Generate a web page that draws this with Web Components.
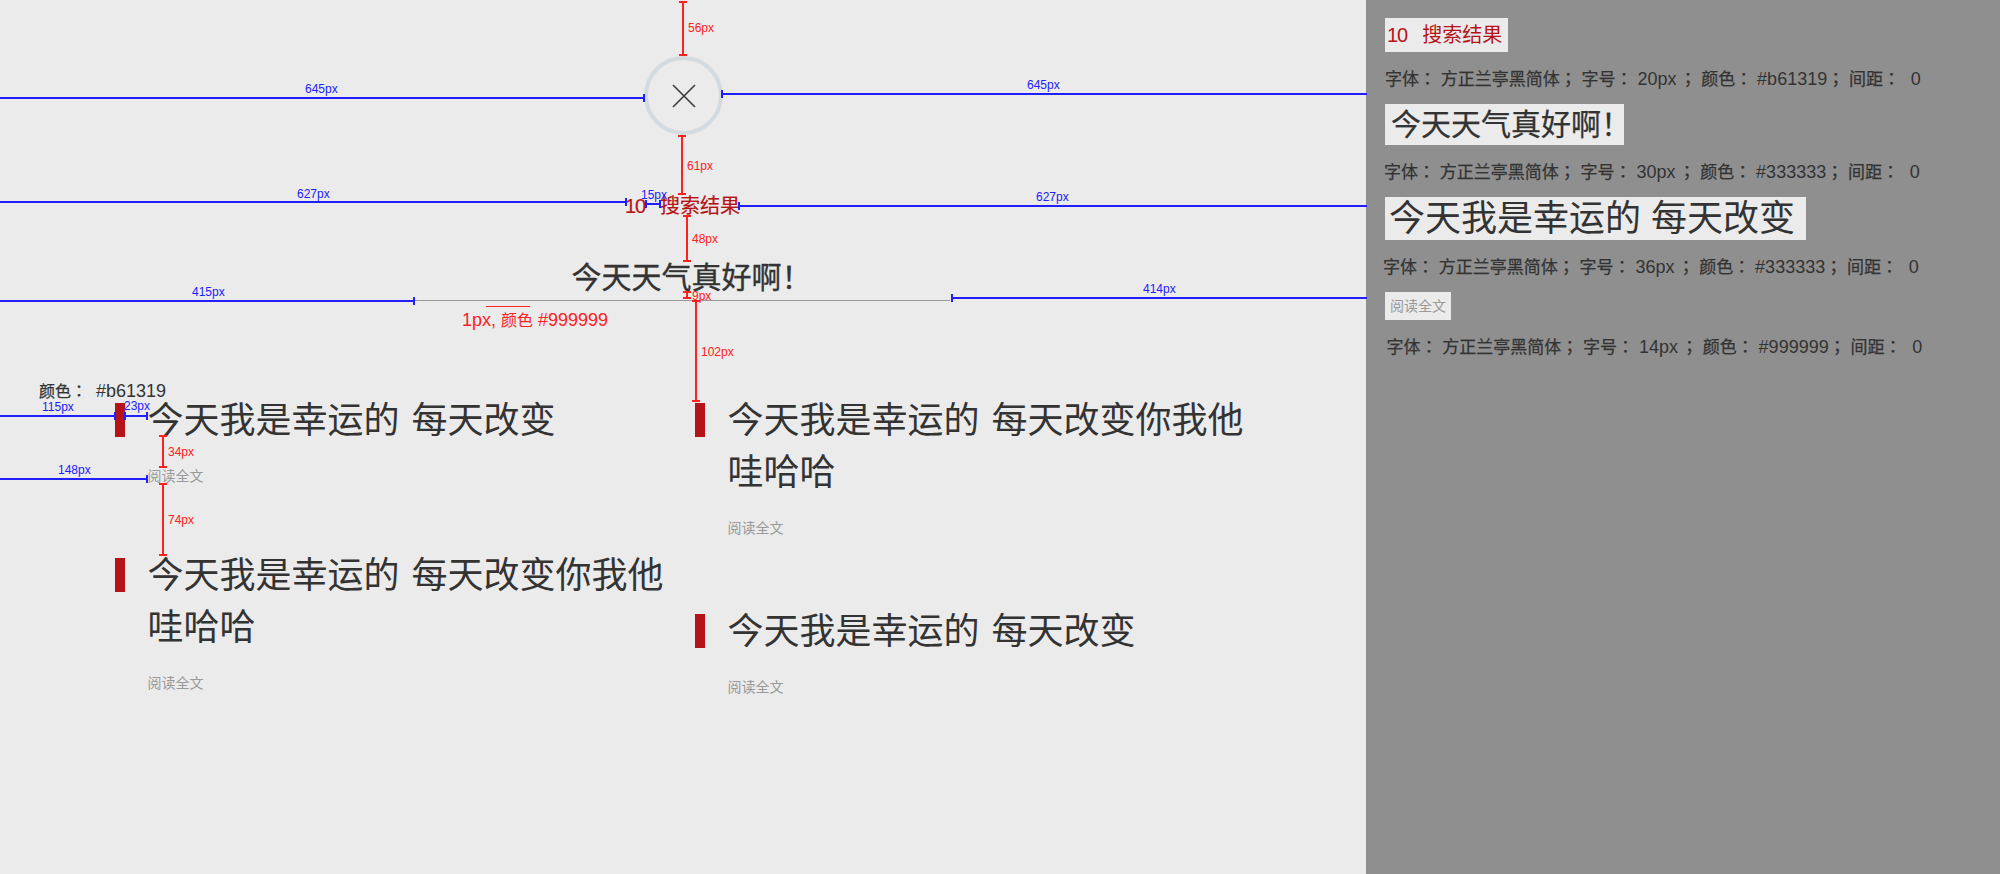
<!DOCTYPE html>
<html lang="zh"><head><meta charset="utf-8"><title>标注</title>
<style>
html,body{margin:0;height:100%;overflow:hidden;background:#ebebeb}
body{font-family:"Liberation Sans","Noto Sans CJK SC",sans-serif;color:#333}
</style></head><body>
<spec-board>
  <spec-canvas>
    <close-button></close-button>
    <result-count n="10" label="搜索结果"></result-count>
    <hero-title>今天天气真好啊！</hero-title>
    <hr-rule></hr-rule>
    <article-grid>
      <article-col gap="63">
        <article-card>今天我是幸运的 每天改变</article-card>
        <article-card>今天我是幸运的 每天改变你我他哇哈哈</article-card>
      </article-col>
      <article-col gap="67.5">
        <article-card>今天我是幸运的 每天改变你我他哇哈哈</article-card>
        <article-card>今天我是幸运的 每天改变</article-card>
      </article-col>
    </article-grid>

    <dim-line axis="v" x="683" y="1" len="55" c="r" label="56px" lx="688" ly="28"></dim-line>
    <dim-line axis="h" x="0" y="98" len="645" c="b" end="1" label="645px" lx="305" ly="89"></dim-line>
    <dim-line axis="h" x="721" y="94" len="646" c="b" start="1" label="645px" lx="1027" ly="85"></dim-line>
    <dim-line axis="v" x="682" y="135" len="60" c="r" label="61px" lx="687" ly="166"></dim-line>
    <dim-line axis="h" x="0" y="202" len="627" c="b" end="1" label="627px" lx="297" ly="194"></dim-line>
    <dim-line axis="h" x="738" y="206" len="629" c="b" start="1" label="627px" lx="1036" ly="197"></dim-line>
    <dim-line axis="h" x="645" y="204" len="16" c="b" start="1" end="1" label="15px" lx="641" ly="195"></dim-line>
    <dim-line axis="v" x="687" y="215" len="47" c="r" label="48px" lx="692" ly="239"></dim-line>
    <dim-line axis="h" x="0" y="301" len="415" c="b" end="1" label="415px" lx="192" ly="292"></dim-line>
    <dim-line axis="h" x="951" y="298" len="416" c="b" start="1" label="414px" lx="1143" ly="289"></dim-line>
    <dim-line axis="v" x="687" y="291" len="8" c="r" label="9px" lx="692" ly="296"></dim-line>
    <dim-line axis="v" x="696" y="300" len="102" c="r" label="102px" lx="701" ly="352"></dim-line>
    <dim-line axis="h" x="0" y="416" len="116" c="b" end="1" label="115px" lx="42" ly="407"></dim-line>
    <dim-line axis="h" x="124" y="416" len="24" c="b" start="1" end="1" label="23px" lx="124" ly="406"></dim-line>
    <dim-line axis="v" x="163" y="435" len="33" c="r" label="34px" lx="168" ly="452"></dim-line>
    <dim-line axis="h" x="0" y="479" len="148" c="b" end="1" label="148px" lx="58" ly="470"></dim-line>
    <dim-line axis="v" x="163" y="483" len="73" c="r" label="74px" lx="168" ly="520"></dim-line>
    <red-note x="39" y="379" c="#333"><span lang="zh-TW" style="font-size:16px;font-family:'Noto Sans CJK TC',sans-serif;-webkit-text-stroke:.25px #333">颜色：</span><span style="margin-left:9px">#b61319</span></red-note>
    <red-note x="462" y="309" c="#ff2020" u="1">1px, <span style="font-size:16px">颜色</span> #999999</red-note>
  </spec-canvas>
  <spec-panel>
    <spec-item top="18" h="34" pad="2" size="20" color="#b61319" w="123" shift="0" sz="20px" col="#b61319"><span style="letter-spacing:-1px">10</span><span style="margin-left:15px">搜索结果</span></spec-item>
    <spec-item h="41" pad="6" size="30" color="#333" w="239" shift="-1" sz="30px" col="#333333" heavy="1">今天天气真好啊！</spec-item>
    <spec-item h="43" pad="4" size="36" color="#333" w="421" shift="-2" sz="36px" col="#333333">今天我是幸运的 每天改变</spec-item>
    <spec-item h="28" pad="5" size="14" color="#999" w="66" shift="1.5" sz="14px" col="#999999">阅读全文</spec-item>
  </spec-panel>
</spec-board>
<script>
const def=(name,html,setup)=>customElements.define(name,class extends HTMLElement{
  constructor(){super();this.attachShadow({mode:"open"}).innerHTML=html}
  connectedCallback(){setup&&setup(this,this.shadowRoot)}
});
def("spec-board",`<style>:host{display:flex;width:2000px;height:874px;overflow:hidden}</style><slot></slot>`);
def("spec-canvas",`<style>:host{display:flex;flex-direction:column;position:relative;width:1366px;height:874px;background:#ebebeb;flex:none}</style><slot></slot>`);
def("close-button",`<style>:host{display:flex;box-sizing:border-box;width:79px;height:79px;margin:56px 0 0 644px;border:4px solid #d3dae0;border-radius:50%;align-items:center;justify-content:center}svg{display:block}</style>
<svg width="24" height="24" viewBox="0 0 24 24"><path d="M1 1L23 23M23 1L1 23" stroke="#3a3a3a" stroke-width="1.6" fill="none"/></svg>`);
def("result-count",`<style>:host{display:flex;justify-content:center;margin-top:59px;height:24px;line-height:24px;font-size:20px;color:#b61319;padding-right:1px;-webkit-text-stroke:.2px #b61319}
.n{letter-spacing:-1.1px;margin-right:15px}</style><span class="n"></span><span class="l"></span>`,(h,s)=>{s.querySelector(".n").textContent=h.getAttribute("n");s.querySelector(".l").textContent=h.getAttribute("label")});
def("hero-title",`<style>:host{display:block;text-align:center;margin-top:40px;height:40px;line-height:40px;font-size:30px;color:#333;padding-left:17px;-webkit-text-stroke:.35px #333}</style><slot></slot>`);
def("hr-rule",`<style>:host{display:block;height:1px;margin:2px 416px 0 415px;background:#999}</style>`);
def("article-grid",`<style>:host{display:grid;grid-template-columns:580px 580px;padding-left:115px;margin-top:93px}</style><slot></slot>`);
def("article-col",`<style>:host{display:flex;flex-direction:column}</style><slot></slot>`,(h)=>{h.style.gap=h.getAttribute("gap")+"px"});
def("article-card",`<style>:host{display:grid;grid-template-columns:10px 520px;column-gap:22.5px}
i{display:block;width:10px;height:34px;margin-top:9px;background:#b61319}
h2{margin:1px 0 0;font-weight:400;font-size:36px;line-height:51.5px;color:#333;word-spacing:2px}
a{display:block;margin-top:19.5px;font-size:14px;line-height:20px;color:#999}</style>
<i></i><div><h2><slot></slot></h2><a>阅读全文</a></div>`);
def("dim-line",`<style>:host{position:absolute;display:block;left:0;top:0;width:0;height:0;--c:#ff2020}
.l,.t,.x{position:absolute;background:var(--c)}
.x{background:none;color:var(--c);font-size:12px;line-height:14px;white-space:nowrap;transform:translateY(-7px)}</style><div class="l"></div><div class="t a"></div><div class="t b"></div><div class="x"></div>`,(h,s)=>{
  const g=k=>+h.getAttribute(k)||0,v=h.getAttribute("axis")==="v",x=g("x"),y=g("y"),n=g("len"),blue=h.getAttribute("c")==="b";
  h.style.setProperty("--c",blue?"#2020ff":"#ff2020");
  const pos=(e,l,t,w,ht)=>{e.style.cssText+=`left:${l}px;top:${t}px;width:${w}px;height:${ht}px`};
  const [L,A,B,X]=[".l",".a",".b",".x"].map(q=>s.querySelector(q));
  if(v){pos(L,x-1,y,2,n);pos(A,x-4,y,8,2);pos(B,x-4,y+n-2,8,2)}
  else{pos(L,x,y-1,n,2);
    if(h.hasAttribute("start"))pos(A,x,y-4,2,8);else A.remove();
    if(h.hasAttribute("end"))pos(B,x+n-2,y-4,2,8);else B.remove()}
  X.textContent=h.getAttribute("label");X.style.left=g("lx")+"px";X.style.top=g("ly")+"px";
});
def("red-note",`<style>:host{position:absolute;font-size:18px;line-height:22px;white-space:nowrap}
.u{position:absolute;left:24px;width:44px;top:-3px;height:1px;background:#ff2020}</style><slot></slot>`,(h,s)=>{
  h.style.left=h.getAttribute("x")+"px";h.style.top=h.getAttribute("y")+"px";h.style.color=h.getAttribute("c");
  if(h.hasAttribute("u")){const d=document.createElement("div");d.className="u";s.appendChild(d)}
});
def("spec-panel",`<style>:host{display:flex;flex-direction:column;flex:1;background:#8f8f8f;padding-left:19px}</style><slot></slot>`);
def("spec-item",`<style>:host{display:block}
.box{box-sizing:border-box;background:#ebebeb;white-space:nowrap;overflow:hidden}
.d{font-family:"Noto Sans CJK TC",sans-serif;font-size:17px;line-height:22px;height:22px;color:#333;white-space:nowrap;margin:15px 0;word-spacing:1px;-webkit-text-stroke:.25px #333}
.d span{font-family:"Liberation Sans",sans-serif;font-size:18px;-webkit-text-stroke:0}
.z{margin-right:3px}.o{margin-left:6px}</style><div class="box"><slot></slot></div>
<div class="d" lang="zh-TW">字体： 方正兰亭黑简体； 字号： <span class="z"></span>； 颜色： <span class="c"></span>； 间距： <span class="o">0</span></div>`,(h,s)=>{
  const g=k=>+h.getAttribute(k)||0,b=s.querySelector(".box"),d=s.querySelector(".d");
  if(g("top"))h.style.marginTop=g("top")+"px";
  b.style.cssText=`width:${g("w")}px;height:${g("h")}px;line-height:${g("h")}px;padding-left:${g("pad")}px;font-size:${g("size")}px;color:${h.getAttribute("color")}`;
  if(h.hasAttribute("heavy"))b.style.webkitTextStroke=".25px #333";
  d.style.marginLeft=g("shift")+"px";
  s.querySelector(".z").textContent=h.getAttribute("sz");s.querySelector(".c").textContent=h.getAttribute("col");
});
</script></body></html>
